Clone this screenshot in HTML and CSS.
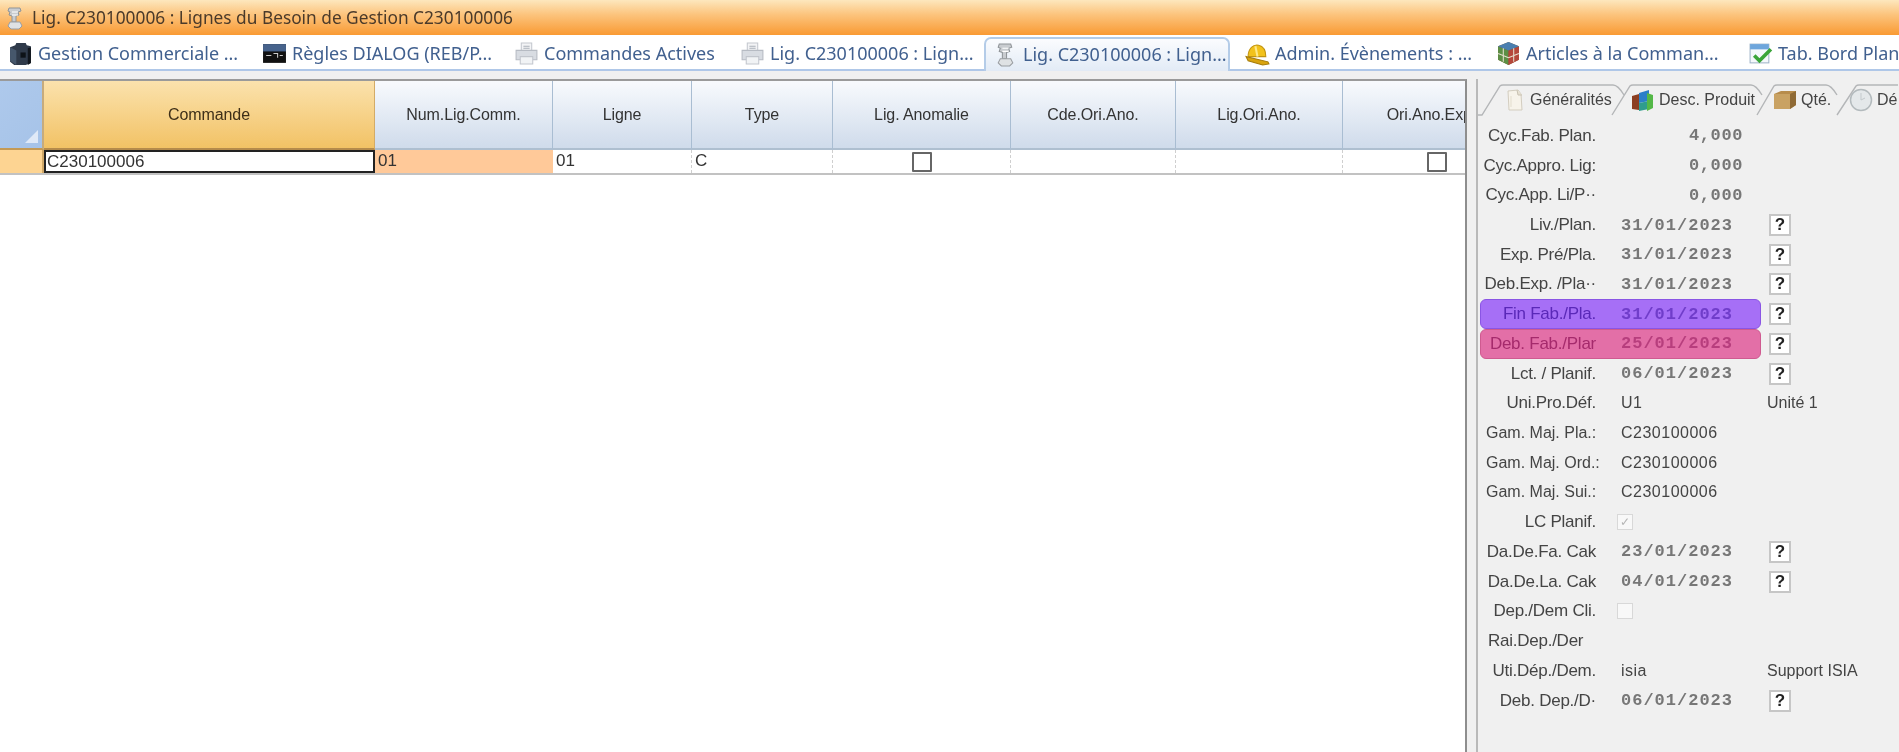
FILE: index.html
```html
<!DOCTYPE html>
<html lang="fr">
<head>
<meta charset="utf-8">
<title>Lig. C230100006</title>
<link rel="stylesheet" href="styles.css">
</head>
<body>
<svg class="defs" width="0" height="0" aria-hidden="true">
  <defs>
    <symbol id="i-vise" viewBox="0 0 24 24">
      <path d="M6 2h11l1 3-3 1 1 3-3 1v6h-4v-6l-3-1 1-3-2-1z" fill="#c9ccd0" stroke="#8f9498"/>
      <path d="M9 6h6M9 9h6" stroke="#fff" fill="none"/>
      <path d="M7 16h10l2 4-3 3H8l-3-3z" fill="#dfe2e4" stroke="#9a9ea2"/>
    </symbol>
    <symbol id="i-tower" viewBox="0 0 24 24">
      <path d="M2 6l5-2 1-2h9l1 2 4 1v16l-5 2H6l-4-3z" fill="#2f3a4a"/>
      <path d="M2 6l6 3v14l-6-4z" fill="#46576c"/>
      <path d="M12 11h5v5h-5z" fill="#0d1218"/>
      <path d="M19 7l3-1v15l-3 2z" fill="#11161d"/>
    </symbol>
    <symbol id="i-monitor" viewBox="0 0 24 24">
      <rect x="1" y="3" width="22" height="18" fill="#111"/>
      <rect x="1" y="3" width="22" height="7" fill="#47638c"/>
      <path d="M4 14h5M11 12h4v4M17 14h3" stroke="#ccc" fill="none"/>
    </symbol>
    <symbol id="i-printer" viewBox="0 0 24 24">
      <path d="M7 2h10v8H7z" fill="#f3f4f6" stroke="#c3c7ce"/>
      <path d="M2 9h20v9H2z" fill="#d8dce2" stroke="#b6bbc3"/>
      <path d="M6 15h12v7H6z" fill="#f1f3f5" stroke="#c2c6cd"/>
      <path d="M9 5h6M9 7h6" stroke="#aab0b9"/>
    </symbol>
    <symbol id="i-hat" viewBox="0 0 24 24">
      <path d="M3 15C3 7 8 3 13 4c5 1 7 5 7 11z" fill="#f2c21c" stroke="#c19412"/>
      <path d="M1 15l21 5 1 2-6 1L3 19z" fill="#d9a40f" stroke="#a67c0a"/>
      <path d="M10 5l2 10" stroke="#fde98a" stroke-width="2"/>
    </symbol>
    <symbol id="i-cube" viewBox="0 0 24 24">
      <path d="M12 1l10 4v13l-10 5-10-5V5z" fill="#7a5c3a"/>
      <path d="M2 5l10 4v14l-10-5z" fill="#5c8f45"/>
      <path d="M12 9l10-4v13l-10 5z" fill="#b5473a"/>
      <path d="M12 1l10 4-10 4L2 5z" fill="#4a7fb0"/>
      <path d="M7 7v13M17 7v13M2 12l10 4 10-4" stroke="#e8e2d0" fill="none"/>
    </symbol>
    <symbol id="i-cal" viewBox="0 0 24 24">
      <rect x="2" y="3" width="18" height="18" fill="#f4f8fc" stroke="#9fb3c8"/>
      <rect x="2" y="3" width="18" height="5" fill="#6ea6dc"/>
      <path d="M6 14l5 5 11-11" stroke="#3aa53a" stroke-width="3.5" fill="none"/>
    </symbol>
    <symbol id="i-doc" viewBox="0 0 24 24">
      <path d="M6 3l10-1 3 4 1 16H7z" fill="#f7f3ea" stroke="#d3cdbf"/>
      <path d="M15 2l1 5h4" fill="#e7e1d2" stroke="#c9c2b2"/>
      <path d="M9 8v11" stroke="#e3ddcd"/>
    </symbol>
    <symbol id="i-books" viewBox="0 0 24 24">
      <path d="M1 8l7-2v16l-7-1z" fill="#8c3f22"/>
      <path d="M8 5l10-3v11l-10 2z" fill="#2c7fc9"/>
      <path d="M8 15l10-2v8l-10 2z" fill="#2f9d8e"/>
      <path d="M16 5l6 2v13l-6 3z" fill="#54b848"/>
    </symbol>
    <symbol id="i-box" viewBox="0 0 24 24">
      <path d="M1 6l7-3h15v14l-6 4H1z" fill="#b78c4c"/>
      <path d="M1 6h16v15H1z" fill="#c9a263"/>
      <path d="M17 6l6-3v14l-6 4z" fill="#8f6a35"/>
    </symbol>
    <symbol id="i-clock" viewBox="0 0 24 24">
      <circle cx="12" cy="12" r="10.5" fill="#e4e8ea" stroke="#b3babd" stroke-width="1.5"/>
      <path d="M12 5v7l4-2" stroke="#c3c9cc" fill="none"/>
    </symbol>
  </defs>
</svg>
<div class="app">
  <header class="titlebar">
    <svg class="ico"><use href="#i-vise"/></svg>
    <span class="title-text">Lig. C230100006 : Lignes du Besoin de Gestion C230100006</span>
  </header>

  <nav class="tabs">
    <div class="tab w-254"><svg class="ico"><use href="#i-tower"/></svg><span>Gestion Commerciale ...</span></div>
    <div class="tab w-252"><svg class="ico"><use href="#i-monitor"/></svg><span>Règles DIALOG (REB/P...</span></div>
    <div class="tab w-226"><svg class="ico"><use href="#i-printer"/></svg><span>Commandes Actives</span></div>
    <div class="tab w-244"><svg class="ico"><use href="#i-printer"/></svg><span>Lig. C230100006 : Lign...</span></div>
    <div class="tab tab-active"><svg class="ico"><use href="#i-vise"/></svg><span>Lig. C230100006 : Lign...</span></div>
    <div class="tab w-251"><svg class="ico"><use href="#i-hat"/></svg><span>Admin. Évènements : ...</span></div>
    <div class="tab w-252"><svg class="ico"><use href="#i-cube"/></svg><span>Articles à la Comman...</span></div>
    <div class="tab"><svg class="ico"><use href="#i-cal"/></svg><span>Tab. Bord Plan</span></div>
  </nav>

  <main class="workspace">
    <section class="grid">
      <div class="gridrow head">
        <div class="corner"></div>
        <div class="hd hd-active">Commande</div>
        <div class="hd">Num.Lig.Comm.</div>
        <div class="hd">Ligne</div>
        <div class="hd">Type</div>
        <div class="hd">Lig. Anomalie</div>
        <div class="hd">Cde.Ori.Ano.</div>
        <div class="hd">Lig.Ori.Ano.</div>
        <div class="hd">Ori.Ano.Exp.</div>
      </div>
      <div class="gridrow datarow">
        <div class="rowhead"></div>
        <div class="cell cell-current">C230100006</div>
        <div class="cell cell-sel">01</div>
        <div class="cell">01</div>
        <div class="cell">C</div>
        <div class="cell cell-check"><span class="check"></span></div>
        <div class="cell"></div>
        <div class="cell"></div>
        <div class="cell cell-check"><span class="check"></span></div>
      </div>
    </section>

    <aside class="panel">
      <div class="ptabs">
        <svg class="ptab-lines" width="423" height="32" viewBox="0 0 423 32" aria-hidden="true">
          <path d="M0 31h4L22 2q1-1 3-1h110q5 0 11 10M134 31l18-29q1-1 3-1h118q5 0 11 10M279 31l17-29q1-1 3-1h49q5 0 11 10M359 31l19-29q1-1 3-1h43" fill="none" stroke="#b4b6b8" stroke-width="1.4"/>
        </svg>
        <div class="ptab ptab-1"><svg class="ico"><use href="#i-doc"/></svg><span>Généralités</span></div>
        <div class="ptab ptab-2"><svg class="ico"><use href="#i-books"/></svg><span>Desc. Produit</span></div>
        <div class="ptab ptab-3"><svg class="ico"><use href="#i-box"/></svg><span>Qté.</span></div>
        <div class="ptab"><svg class="ico"><use href="#i-clock"/></svg><span>Dé</span></div>
      </div>
      <div class="form">
        <div class="row"><div class="field"><div class="lbl">Cyc.Fab. Plan.</div><div class="num">4,000</div></div></div>
        <div class="row"><div class="field"><div class="lbl">Cyc.Appro. Lig:</div><div class="num">0,000</div></div></div>
        <div class="row"><div class="field"><div class="lbl">Cyc.App. Li/P··</div><div class="num">0,000</div></div></div>
        <div class="row"><div class="field"><div class="lbl">Liv./Plan.</div><div class="date">31/01/2023</div></div><button class="q">?</button></div>
        <div class="row"><div class="field"><div class="lbl">Exp. Pré/Pla.</div><div class="date">31/01/2023</div></div><button class="q">?</button></div>
        <div class="row"><div class="field"><div class="lbl">Deb.Exp. /Pla··</div><div class="date">31/01/2023</div></div><button class="q">?</button></div>
        <div class="row"><div class="field hl-violet"><div class="lbl">Fin Fab./Pla.</div><div class="date">31/01/2023</div></div><button class="q">?</button></div>
        <div class="row"><div class="field hl-pink"><div class="lbl">Deb. Fab./Plar</div><div class="date">25/01/2023</div></div><button class="q">?</button></div>
        <div class="row"><div class="field"><div class="lbl">Lct. / Planif.</div><div class="date">06/01/2023</div></div><button class="q">?</button></div>
        <div class="row"><div class="field"><div class="lbl">Uni.Pro.Déf.</div><div class="val">U1</div></div><div class="extra">Unité 1</div></div>
        <div class="row"><div class="field"><div class="lbl lbl-wide">Gam. Maj. Pla.:</div><div class="val">C230100006</div></div></div>
        <div class="row"><div class="field"><div class="lbl lbl-wide">Gam. Maj. Ord.:</div><div class="val">C230100006</div></div></div>
        <div class="row"><div class="field"><div class="lbl lbl-wide">Gam. Maj. Sui.:</div><div class="val">C230100006</div></div></div>
        <div class="row"><div class="field"><div class="lbl">LC Planif.</div><div class="val"><span class="box box-on">✓</span></div></div></div>
        <div class="row"><div class="field"><div class="lbl">Da.De.Fa. Cak</div><div class="date">23/01/2023</div></div><button class="q">?</button></div>
        <div class="row"><div class="field"><div class="lbl">Da.De.La. Cak</div><div class="date">04/01/2023</div></div><button class="q">?</button></div>
        <div class="row"><div class="field"><div class="lbl">Dep./Dem Cli.</div><div class="val"><span class="box"></span></div></div></div>
        <div class="row"><div class="field"><div class="lbl lbl-short">Rai.Dep./Der</div></div></div>
        <div class="row"><div class="field"><div class="lbl">Uti.Dép./Dem.</div><div class="val">isia</div></div><div class="extra">Support ISIA</div></div>
        <div class="row"><div class="field"><div class="lbl">Deb. Dep./D·</div><div class="date">06/01/2023</div></div><button class="q">?</button></div>
      </div>
    </aside>
  </main>
</div>
</body>
</html>
```

FILE: styles.css
```css
* { box-sizing: border-box; }
html, body { margin: 0; height: 100%; overflow: hidden; background: #fff; }
.defs { position: absolute; }
.app {
  width: 1899px;
  height: 752px;
  display: flex;
  flex-direction: column;
  overflow: hidden;
  font-family: "Liberation Sans", Arial, sans-serif;
  filter: blur(0.7px);
}
.ico { width: 24px; height: 24px; flex: none; }

.titlebar {
  height: 35px;
  flex: none;
  display: flex;
  align-items: center;
  gap: 5px;
  padding-left: 3px;
  background: linear-gradient(#fde7bd 0%, #fcc57f 40%, #f99a33 100%);
}
.titlebar .ico { height: 26px; }
.title-text {
  font-family: "Noto Sans", sans-serif;
  font-size: 17.3px;
  color: #4a3a2a;
}

.tabs {
  height: 36px;
  flex: none;
  display: flex;
  align-items: center;
  padding: 2px 0 0 8px;
  border-bottom: 2px solid #afc7e8;
  background: #fff;
  white-space: nowrap;
}
.tab {
  display: flex;
  align-items: center;
  gap: 5px;
  height: 32px;
  flex: none;
  font-family: "Noto Sans", sans-serif;
  font-size: 18px;
  color: #41608f;
}
.tab .ico { width: 25px; height: 25px; }
.w-254 { width: 254px; }
.w-252 { width: 252px; }
.w-226 { width: 226px; }
.w-244 { width: 244px; }
.w-251 { width: 251px; }
.tab-active {
  width: 246px;
  margin: 0 15px -2px 0;
  height: 34px;
  align-self: flex-end;
  padding: 0 0 2px 7px;
  border: 2px solid #b4cce8;
  border-bottom: 0;
  border-radius: 7px 7px 0 0;
  background: linear-gradient(#fbfcfe, #e2ebf6);
}

.workspace {
  flex: 1;
  display: flex;
  min-height: 0;
  padding-top: 8px;
  background: #f0f0f0;
}
.grid {
  width: 1467px;
  flex: none;
  background: #fff;
  border-top: 2px solid #9a9a9a;
  border-right: 2px solid #8e8e8e;
  overflow: hidden;
}
.gridrow {
  display: grid;
  grid-template-columns: 44px 331px 178px 139px 141px 178px 165px 167px 177px;
}
.head { height: 69px; font-size: 16px; color: #333; }
.corner {
  background: linear-gradient(135deg, #aec9ec, #a6c3e8);
  border-right: 2px solid #c7ab7c;
  border-bottom: 2px solid #c49a55;
  display: flex;
  justify-content: flex-end;
  align-items: flex-end;
  padding: 0 4px 5px 0;
}
.corner::after {
  content: "";
  border-style: solid;
  border-width: 0 0 13px 13px;
  border-color: transparent transparent #dfe9f7 transparent;
}
.hd {
  display: flex;
  align-items: center;
  justify-content: center;
  white-space: nowrap;
  overflow: hidden;
  letter-spacing: -0.1px;
  background: linear-gradient(#f8fafd, #cfdbeb);
  border-right: 1px solid #a9bdd2;
  border-bottom: 2px solid #aebfd0;
}
.hd:last-child { border-right: 0; }
.hd-active {
  background: linear-gradient(#fbe2ad, #f2c265);
  border-right-color: #d3ab67;
  border-bottom-color: #b58b4b;
  color: #3e2f18;
}
.datarow { height: 25px; font-size: 17px; color: #333; border-bottom: 2px solid #c2c2c2; }
.rowhead { background: #fdd492; border-right: 2px solid #d0a868; }
.cell {
  padding: 1px 0 0 3px;
  line-height: 20px;
  border-right: 1px dashed #cfcfcf;
  white-space: nowrap;
}
.cell:last-child { border-right: 0; }
.cell-current { border: 2px solid #222; padding: 0 0 0 1px; line-height: 19px; }
.cell-sel { background: #ffc999; border-right: 0; }
.cell-check { display: flex; justify-content: center; align-items: center; padding: 0; }
.cell-check:last-child { justify-content: flex-start; padding-left: 84px; }
.check {
  width: 20px;
  height: 20px;
  background: #fff;
  border: 2px solid #666;
  border-radius: 1px;
}

.panel {
  flex: 1;
  margin-left: 9px;
  margin-right: 1px;
  min-width: 0;
  border-left: 2px solid #b9b9b9;
  overflow: hidden;
}
.ptabs {
  height: 42px;
  display: flex;
  align-items: center;
  padding-left: 24px;
  font-size: 16px;
  color: #444;
  white-space: nowrap;
  position: relative;
}
.ptab-lines { position: absolute; left: 0; top: 5px; }
.ptab { display: flex; align-items: center; gap: 4px; flex: none; position: relative; }
.ptab-1 { width: 129px; }
.ptab-2 { width: 142px; }
.ptab-3 { width: 76px; }
.form { display: flex; flex-direction: column; padding-left: 2px; }
.row {
  height: 29.72px;
  display: flex;
  align-items: center;
  flex: none;
}
.field {
  width: 281px;
  height: 100%;
  display: flex;
  align-items: center;
  border: 1px solid transparent;
  border-radius: 6px;
  flex: none;
  color: #444;
}
.hl-violet { background: #a66ff6; border-color: #8a55e4; color: #5a28b8; }
.hl-pink { background: #e36fa7; border-color: #cf5a90; color: #a52a6c; }
.lbl {
  width: 118px;
  flex: none;
  text-align: right;
  padding-right: 3px;
  font-size: 17px;
  letter-spacing: -0.25px;
  white-space: nowrap;
  overflow: hidden;
}
.lbl-wide { width: 122px; padding: 0 0 0 5px; text-align: left; font-size: 16px; letter-spacing: 0; }
.lbl-short { text-align: left; padding: 0 0 0 7px; }
.date, .num {
  font-family: "Liberation Mono", monospace;
  font-weight: bold;
  font-size: 17px;
  letter-spacing: 1px;
  opacity: 0.7;
}
.date { margin-left: 22px; }
.num { margin-left: 22px; width: 122px; text-align: right; letter-spacing: 0.6px; }
.val {
  margin-left: 22px;
  font-size: 16px;
  letter-spacing: 0.5px;
  display: flex;
  align-items: center;
}
.lbl-wide + .val { margin-left: 18px; }
.box {
  width: 16px;
  height: 16px;
  margin-left: -4px;
  background: #f8f8f8;
  border: 1px solid #d8d8d8;
  font-size: 12px;
  line-height: 14px;
  text-align: center;
  color: #b5b5b5;
}
.q {
  width: 22px;
  height: 22px;
  margin-left: 8px;
  padding: 0;
  background: #fff;
  border: 2px solid #c6c6c6;
  font: bold 17px/18px "Liberation Sans", sans-serif;
  color: #222;
  flex: none;
}
.extra { margin-left: 6px; font-size: 16px; letter-spacing: 0; color: #444; white-space: nowrap; }
```
